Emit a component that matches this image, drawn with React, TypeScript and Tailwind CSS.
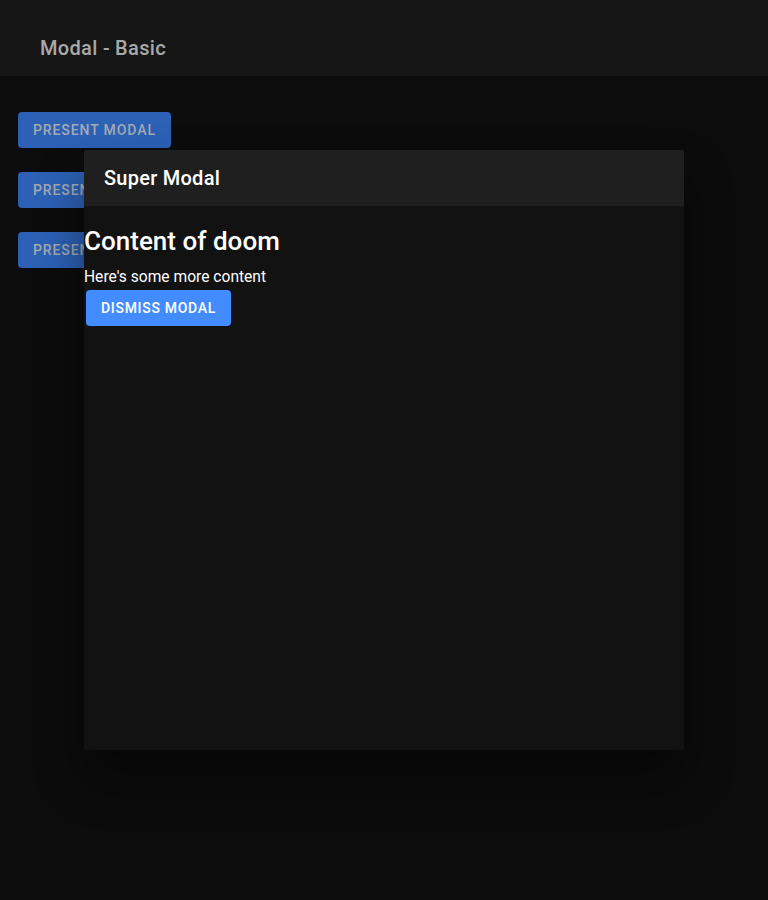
import React from "react";

export default function App() {
  const font = { fontFamily: "Roboto, 'Noto Sans', sans-serif" };
  const med = { fontFamily: "'Roboto Medium', Roboto, sans-serif", fontWeight: 500 };
  return (
    <div className="relative w-[768px] h-[900px] bg-[#0c0c0c] overflow-hidden" style={font}>
      <header className="h-[76px] bg-[#161616] flex items-end pb-[16px] pl-[40px]">
        <h1 className="text-[20px] font-medium tracking-[0.015em] text-[#a8a8a8] leading-[24px]" style={med}>Modal - Basic</h1>
      </header>
      <div className="flex flex-col items-start gap-[24px] pt-[36px] pl-[18px]">
        {[0, 1, 2].map((i) => (
          <button
            key={i}
            className="h-[36px] px-[15px] rounded-[4px] bg-[#2c61b5] text-[#a3a9b3] text-[14px] font-medium tracking-[0.065em] uppercase"
            style={med}
          >
            Present Modal
          </button>
        ))}
      </div>

      <div className="absolute inset-0 flex items-center justify-center">
        <div className="w-[600px] h-[600px] rounded-[2px] bg-[#121212] flex flex-col overflow-hidden shadow-[0_28px_48px_rgba(0,0,0,0.45)]">
          <div className="h-[56px] shrink-0 bg-[#1f1f1f] flex items-center pl-[20px]">
            <span className="text-[20px] font-medium text-white tracking-[0.0125em]" style={med}>Super Modal</span>
          </div>
          <div className="flex flex-col items-start">
            <h2 className="text-[26px] font-medium text-white mt-[20px] mb-[11px] leading-[30px]" style={med}>Content of doom</h2>
            <p className="text-[15.6px] text-white leading-[20px]">Here's some more content</p>
            <button className="mt-[3px] ml-[2px] h-[36px] px-[15px] rounded-[4px] bg-[#428cff] text-white text-[14px] font-medium tracking-[0.05em] uppercase" style={med}>
              Dismiss Modal
            </button>
          </div>
        </div>
      </div>
    </div>
  );
}
